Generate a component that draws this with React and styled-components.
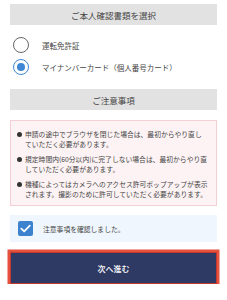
import React, { useState } from 'react';
import styled, { createGlobalStyle } from 'styled-components';

const Global = createGlobalStyle`
  body {
    margin: 0;
    background: #fff;
    font-family: "Noto Sans CJK JP", "Noto Sans", sans-serif;
    color: #333;
  }
`;

const Page = styled.div`
  display: flex;
  flex-direction: column;
  padding: 4px 10px 0 10px;
`;

const SectionTitle = styled.div`
  height: 21px;
  display: flex;
  align-items: center;
  justify-content: center;
  background: #e2e2e2;
  font-size: 8.5px;
  color: #444;
`;

const RadioList = styled.div`
  display: flex;
  flex-direction: column;
  gap: 6px;
  padding: 12px 0 14px 3px;
`;

const RadioRow = styled.label`
  display: flex;
  align-items: center;
  gap: 13px;
  height: 16px;
  font-size: 7.5px;
  color: #444;
  cursor: pointer;
`;

const RadioCircle = styled.span`
  width: 16px;
  height: 16px;
  box-sizing: border-box;
  border-radius: 50%;
  border: 1.3px solid ${({ checked }) => (checked ? '#3f86d4' : '#666')};
  display: flex;
  align-items: center;
  justify-content: center;

  &::after {
    content: '';
    width: 8px;
    height: 8px;
    border-radius: 50%;
    background: #3f86d4;
    display: ${({ checked }) => (checked ? 'block' : 'none')};
  }
`;

const NoticeBox = styled.ul`
  list-style: none;
  margin: 10px 0 0 0;
  padding: 8px 8px 6px 6px;
  background: #fdf3f4;
  border: 1px solid #f3d0d4;
  display: flex;
  flex-direction: column;
  gap: 5px;
`;

const NoticeItem = styled.li`
  display: flex;
  gap: 3px;
  font-size: 6.8px;
  line-height: 10px;
  color: #444;

  &::before {
    content: '';
    flex: none;
    width: 5px;
    height: 5px;
    margin-top: 2.5px;
    border-radius: 50%;
    background: #333;
  }
`;

const ConfirmRow = styled.label`
  margin-top: 9px;
  height: 27px;
  display: flex;
  align-items: center;
  gap: 10px;
  padding-left: 8px;
  background: #f0f6fd;
  font-size: 6.8px;
  color: #444;
  cursor: pointer;
`;

const CheckBox = styled.span`
  width: 15px;
  height: 15px;
  border-radius: 2px;
  background: ${({ checked }) => (checked ? '#3d82cf' : '#fff')};
  display: flex;
  align-items: center;
  justify-content: center;
`;

const NextButton = styled.button`
  margin-top: 10px;
  height: 32px;
  border: 1.5px solid #c23a2e;
  box-shadow: 0 0 0 2.5px #e5503f;
  background: #2f3a64;
  color: #fff;
  font-family: inherit;
  font-size: 8px;
  font-weight: 500;
  cursor: pointer;
`;

const notices = [
  '申請の途中でブラウザを閉じた場合は、最初からやり直していただく必要があります。',
  '規定時間内(60分以内)に完了しない場合は、最初からやり直していただく必要があります。',
  '機種によってはカメラへのアクセス許可ポップアップが表示されます。撮影のために許可していただく必要があります。',
];

const docs = ['運転免許証', 'マイナンバーカード（個人番号カード）'];

export default function App() {
  const [doc, setDoc] = useState(1);
  const [agreed, setAgreed] = useState(true);

  return (
    <Page>
      <Global />
      <SectionTitle>ご本人確認書類を選択</SectionTitle>
      <RadioList>
        {docs.map((d, i) => (
          <RadioRow key={d} onClick={() => setDoc(i)}>
            <RadioCircle checked={doc === i} />
            {d}
          </RadioRow>
        ))}
      </RadioList>

      <SectionTitle>ご注意事項</SectionTitle>
      <NoticeBox>
        {notices.map((n) => (
          <NoticeItem key={n}>{n}</NoticeItem>
        ))}
      </NoticeBox>

      <ConfirmRow onClick={() => setAgreed(!agreed)}>
        <CheckBox checked={agreed}>
          {agreed && (
            <svg width="11" height="9" viewBox="0 0 11 9">
              <path d="M1.3 4.6 L4.2 7.3 L9.8 1.6" fill="none" stroke="#fff" strokeWidth="1.7" strokeLinecap="round" strokeLinejoin="round" />
            </svg>
          )}
        </CheckBox>
        注意事項を確認しました。
      </ConfirmRow>

      <NextButton>次へ進む</NextButton>
    </Page>
  );
}
